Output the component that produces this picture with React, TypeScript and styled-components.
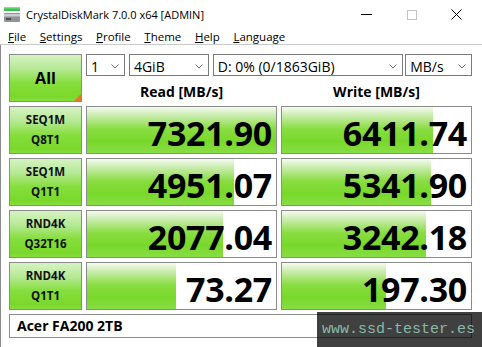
import { Fragment } from 'react';
import styled, { createGlobalStyle } from 'styled-components';

const GlobalStyle = createGlobalStyle`
  html, body {
    margin: 0;
    padding: 0;
    background: #fff;
  }
  #root {
    width: 482px;
    height: 347px;
  }
`;

const Window = styled.div`
  position: relative;
  width: 482px;
  height: 347px;
  overflow: hidden;
  background: #fff;
  font-family: "Open Sans", "Noto Sans", sans-serif;
  color: #000;
  display: flex;
  flex-direction: column;
  box-sizing: border-box;
  padding-bottom: 1px;
`;

const TitleBar = styled.div`
  height: 29px;
  display: flex;
  align-items: center;
  padding: 0 3px 0 4px;
  flex-shrink: 0;
`;

const TitleText = styled.div`
  font-size: 11px;
  margin-left: 6px;
  flex: 1;
  white-space: nowrap;
`;

const Controls = styled.div`
  display: flex;
  align-items: center;
  height: 100%;
`;

const ControlButton = styled.div`
  width: 45px;
  height: 100%;
  display: flex;
  align-items: center;
  justify-content: center;
`;

const MenuBar = styled.div`
  height: 15px;
  display: flex;
  align-items: center;
  gap: 13.6px;
  padding-left: 8px;
  font-size: 11.5px;
  line-height: 15px;
  border-bottom: 1px solid #c9c9c9;
  flex-shrink: 0;
`;

const MenuItem = styled.span`
  white-space: nowrap;
  u {
    text-decoration: underline;
    text-underline-offset: 1px;
  }
`;

const Client = styled.div`
  flex: 1;
  border-left: 1px solid #8c8c8c;
  border-bottom: 1px solid #8c8c8c;
  padding: 9px 0 0 8px;
`;

const Grid = styled.div`
  display: grid;
  grid-template-columns: 73px 191px 191px;
  grid-auto-rows: 48px;
  column-gap: 4px;
  row-gap: 4px;
`;

const greenFace = `linear-gradient(to bottom, #d6f3c2 0%, #b6e996 30%, #86de3e 60%, #7ad82a 90%, #86dc40 100%)`;

const AllButton = styled.div`
  position: relative;
  box-sizing: border-box;
  border: 1px solid #8c8c8c;
  background: ${greenFace};
  display: flex;
  align-items: center;
  justify-content: center;
  font-weight: 700;
  font-size: 16px;
  &::after {
    content: '';
    position: absolute;
    right: 0;
    bottom: 0;
    border-style: solid;
    border-width: 0 0 7px 7px;
    border-color: transparent transparent #e8782a transparent;
  }
`;

const TopPanel = styled.div`
  grid-column: 2 / 4;
  display: flex;
  flex-direction: column;
`;

const ComboRow = styled.div`
  display: flex;
  height: 22px;
`;

const Combo = styled.div<{ $w: number; $gap: number }>`
  box-sizing: border-box;
  width: ${p => p.$w}px;
  margin-right: ${p => p.$gap}px;
  border: 1px solid #7a7a7a;
  background: #fff;
  display: flex;
  align-items: center;
  justify-content: space-between;
  padding: 3px 5px 0 4px;
  font-size: 14px;
  line-height: 18px;
  white-space: nowrap;
`;

const Headers = styled.div`
  display: grid;
  grid-template-columns: 191px 191px;
  column-gap: 4px;
  padding-top: 6px;
`;

const Header = styled.div`
  text-align: center;
  font-weight: 700;
  font-size: 14px;
  line-height: 19px;
`;

const LabelCell = styled.div`
  box-sizing: border-box;
  border: 1px solid #8c8c8c;
  background: ${greenFace};
  display: flex;
  flex-direction: column;
  align-items: center;
  justify-content: center;
  font-weight: 700;
  font-size: 11.5px;
  line-height: 20px;
  color: #111;
`;

const ValueCell = styled.div`
  position: relative;
  box-sizing: border-box;
  border: 1px solid #8c8c8c;
  background: #fff;
`;

const Bar = styled.div`
  position: absolute;
  left: 0;
  top: 0;
  bottom: 0;
  background: linear-gradient(to bottom, #f4faf0 0%, #c6eba8 20%, #88dd40 48%, #78d82a 75%, #88dd46 100%);
`;

const Value = styled.div`
  position: relative;
  text-align: right;
  padding: 7px 4px 0 0;
  font-weight: 700;
  font-size: 34px;
  line-height: 39px;
  letter-spacing: -0.3px;
`;

const NameBar = styled.div`
  grid-column: 1 / 4;
  box-sizing: border-box;
  height: 24px;
  border: 1px solid #8c8c8c;
  background: #fff;
  padding-left: 7px;
  font-weight: 700;
  font-size: 14px;
  line-height: 22px;
`;

const Watermark = styled.div`
  position: absolute;
  right: 0;
  bottom: 0;
  width: 165px;
  height: 35px;
  background: rgba(0, 0, 0, 0.75);
  box-sizing: border-box;
  padding: 9px 0 0 5px;
  font-family: "Liberation Mono", monospace;
  font-size: 15px;
  line-height: 17px;
  color: #88b9a7;
  white-space: nowrap;
`;

const Chevron = () => (
  <svg width="8" height="5" viewBox="0 0 8 5">
    <path d="M0.5 0.5 L4 4 L7.5 0.5" fill="none" stroke="#6a6a6a" strokeWidth="1" />
  </svg>
);

const AppIcon = () => (
  <svg width="16" height="15" viewBox="0 0 16 15">
    <rect x="0" y="0" width="16" height="4" fill="#3fbf4f" />
    <rect x="0" y="0" width="16" height="1.5" fill="#7fe08a" />
    <rect x="0" y="6" width="16" height="9" rx="1" fill="#8e9496" />
    <rect x="0" y="7" width="16" height="2.5" fill="#c8cdcf" />
    <rect x="2" y="11" width="5" height="2" fill="#4a4f52" />
  </svg>
);

type Row = { l1: string; l2: string; read: string; readPct: number; write: string; writePct: number };

const rows: Row[] = [
  { l1: 'SEQ1M', l2: 'Q8T1', read: '7321.90', readPct: 100, write: '6411.74', writePct: 80 },
  { l1: 'SEQ1M', l2: 'Q1T1', read: '4951.07', readPct: 78, write: '5341.90', writePct: 79 },
  { l1: 'RND4K', l2: 'Q32T16', read: '2077.04', readPct: 72, write: '3242.18', writePct: 76 },
  { l1: 'RND4K', l2: 'Q1T1', read: '73.27', readPct: 47, write: '197.30', writePct: 55 },
];

const menus = ['File', 'Settings', 'Profile', 'Theme', 'Help', 'Language'];

export default function App() {
  return (
    <>
      <GlobalStyle />
      <Window>
        <TitleBar>
          <AppIcon />
          <TitleText>CrystalDiskMark 7.0.0 x64 [ADMIN]</TitleText>
          <Controls>
            <ControlButton>
              <svg width="11" height="2" viewBox="0 0 11 2"><rect width="11" height="1" fill="#000" /></svg>
            </ControlButton>
            <ControlButton>
              <svg width="10" height="10" viewBox="0 0 10 10"><rect x="0.5" y="0.5" width="9" height="9" fill="none" stroke="#c4c4c4" /></svg>
            </ControlButton>
            <ControlButton>
              <svg width="11" height="11" viewBox="0 0 11 11"><path d="M0.5 0.5 L10.5 10.5 M10.5 0.5 L0.5 10.5" stroke="#000" strokeWidth="1" /></svg>
            </ControlButton>
          </Controls>
        </TitleBar>
        <MenuBar>
          {menus.map(m => (
            <MenuItem key={m}><u>{m[0]}</u>{m.slice(1)}</MenuItem>
          ))}
        </MenuBar>
        <Client>
          <Grid>
            <AllButton>All</AllButton>
            <TopPanel>
              <ComboRow>
                <Combo $w={39} $gap={4}>1<Chevron /></Combo>
                <Combo $w={80} $gap={4}>4GiB<Chevron /></Combo>
                <Combo $w={191} $gap={2}>D: 0% (0/1863GiB)<Chevron /></Combo>
                <Combo $w={67} $gap={0}>MB/s<Chevron /></Combo>
              </ComboRow>
              <Headers>
                <Header>Read [MB/s]</Header>
                <Header>Write [MB/s]</Header>
              </Headers>
            </TopPanel>
            {rows.map(r => (
              <Fragment key={r.l1 + r.l2}>
                <LabelCell>
                  <span>{r.l1}</span>
                  <span>{r.l2}</span>
                </LabelCell>
                <ValueCell>
                  <Bar style={{ width: `${r.readPct}%` }} />
                  <Value>{r.read}</Value>
                </ValueCell>
                <ValueCell>
                  <Bar style={{ width: `${r.writePct}%` }} />
                  <Value>{r.write}</Value>
                </ValueCell>
              </Fragment>
            ))}
            <NameBar>Acer FA200 2TB</NameBar>
          </Grid>
        </Client>
        <Watermark>www.ssd-tester.es</Watermark>
      </Window>
    </>
  );
}
